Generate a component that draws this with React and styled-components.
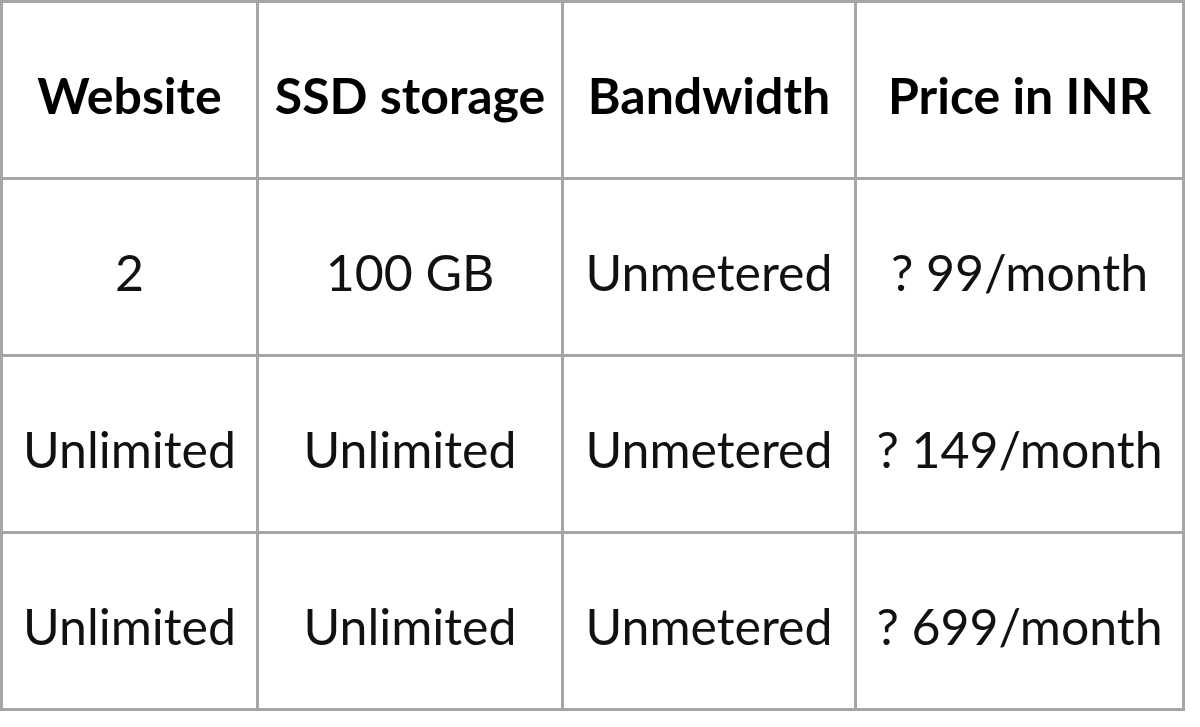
import React from "react";
import styled, { createGlobalStyle } from "styled-components";

const GlobalStyle = createGlobalStyle`
  html, body {
    margin: 0;
    padding: 0;
    background: #ffffff;
  }
`;

const Table = styled.table`
  width: 1182px;
  border-collapse: collapse;
  table-layout: fixed;
  font-family: Lato, "Liberation Sans", sans-serif;
  color: #000;
`;

const Col = styled.col`
  width: ${(p) => p.$w}px;
`;

const Row = styled.tr`
  height: 177px;
`;

const Cell = styled.td`
  border: 3px solid #a6a6a6;
  padding: 10px 0 0 0;
  text-align: center;
  vertical-align: middle;
  font-size: 50px;
  font-weight: ${(p) => (p.$head ? 700 : 400)};
  color: ${(p) => (p.$head ? "#000" : "#111")};
  white-space: nowrap;
  overflow: hidden;
`;

const header = ["Website", "SSD storage", "Bandwidth", "Price in INR"];

const rows = [
  ["2", "100 GB", "Unmetered", "? 99/month"],
  ["Unlimited", "Unlimited", "Unmetered", "? 149/month"],
  ["Unlimited", "Unlimited", "Unmetered", "? 699/month"],
];

const widths = [256, 305, 293, 328];

export default function App() {
  return (
    <>
      <GlobalStyle />
      <Table>
        <colgroup>
          {widths.map((w, i) => (
            <Col key={i} $w={w} />
          ))}
        </colgroup>
        <tbody>
          <Row>
            {header.map((h) => (
              <Cell key={h} $head>
                {h}
              </Cell>
            ))}
          </Row>
          {rows.map((r, i) => (
            <Row key={i}>
              {r.map((c, j) => (
                <Cell key={j}>{c}</Cell>
              ))}
            </Row>
          ))}
        </tbody>
      </Table>
    </>
  );
}
